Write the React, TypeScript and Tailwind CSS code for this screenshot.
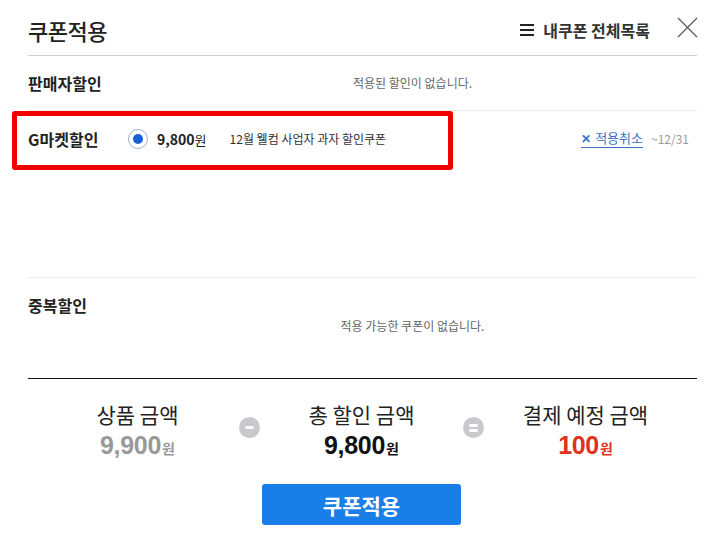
function SummaryItem({ label, amount, color }: { label: string; amount: string; color: string }) {
  return (
    <div className="w-[180px] flex flex-col items-center">
      <div className="text-[21px] leading-[26px] h-[31px] text-[#222]">{label}</div>
      <div className={`flex items-baseline font-bold h-[26px] ${color}`}>
        <span className="text-[25px] leading-[26px] tracking-[-0.3px]" style={{ fontFamily: '"Liberation Sans", Arial, sans-serif' }}>
          {amount}
        </span>
        <span className="text-[14px] leading-[16px] ml-[1px]">원</span>
      </div>
    </div>
  );
}

function Operator({ kind }: { kind: 'minus' | 'equals' }) {
  return (
    <div className="w-[44px] flex justify-center pt-[16px]">
      <div className="w-[21px] h-[21px] rounded-full bg-[#c9c9cd] flex flex-col items-center justify-center gap-[2px]">
        <div className="w-[9px] h-[3px] bg-white rounded-sm" />
        {kind === 'equals' && <div className="w-[9px] h-[3px] bg-white rounded-sm" />}
      </div>
    </div>
  );
}

export default function App() {
  return (
    <div
      className="w-[723px] h-[558px] bg-white text-[#222] overflow-hidden"
      style={{ fontFamily: '"Noto Sans CJK KR", "Noto Sans", sans-serif' }}
    >
      <div className="pl-[28px] pr-[26px]">
        {/* header */}
        <div className="h-[56px] flex items-center border-b border-[#cfcfcf] pt-[4px]">
          <h1 className="text-[22px] leading-[28px] font-medium tracking-[-0.5px]">쿠폰적용</h1>
          <div className="ml-auto flex items-center gap-[9px]">
            <svg width="14" height="12" viewBox="0 0 14 12" className="mt-[1px]">
              <rect x="0" y="0" width="14" height="2" fill="#222" />
              <rect x="0" y="5" width="14" height="2" fill="#222" />
              <rect x="0" y="10" width="14" height="2" fill="#222" />
            </svg>
            <span className="text-[16px] font-semibold text-[#333] leading-[20px]">내쿠폰 전체목록</span>
          </div>
          <button className="ml-[27px] mr-[-1px] mb-[4px]">
            <svg width="21" height="21" viewBox="0 0 21 21">
              <path d="M1 1 L20 20 M20 1 L1 20" stroke="#555" strokeWidth="1.1" fill="none" />
            </svg>
          </button>
        </div>

        {/* seller discount */}
        <div className="h-[55px] flex items-center border-b border-[#ececec]">
          <div className="w-[100px] text-[16px] font-bold leading-[20px]">판매자할인</div>
          <div className="flex-1 text-center text-[12px] text-[#666] leading-[16px]">적용된 할인이 없습니다.</div>
        </div>

        {/* gmarket discount */}
        <div className="h-[167px] border-b border-[#ececec]">
          <div className="relative h-[56px] flex items-center">
            <div className="w-[100px] text-[16px] font-bold leading-[20px]">G마켓할인</div>
            <div className="w-[20px] h-[20px] rounded-full border border-[#9fb3cc] flex items-center justify-center bg-white">
              <div className="w-[10px] h-[10px] rounded-full bg-[#1560d8]" />
            </div>
            <div className="ml-[9px] leading-[18px]">
              <span className="text-[14px] font-bold">9,800</span>
              <span className="text-[13px]">원</span>
            </div>
            <div className="ml-[23px] text-[12px] text-[#333] leading-[16px]">12월 웰컴 사업자 과자 할인쿠폰</div>
            <div className="ml-auto flex items-center gap-[8px] text-[12px] leading-[16px] pr-[8px]">
              <span className="flex items-center gap-[4px] border-b border-[#3a72c4] text-[#3a72c4] pb-[1px]">
                <span className="font-bold text-[12px]">✕</span>
                <span className="text-[13px]">적용취소</span>
              </span>
              <span className="text-[#999]">~12/31</span>
            </div>
            <div className="absolute left-[-16px] top-[0px] w-[441px] h-[59px] border-[5px] border-[#f00000] rounded-[3px] pointer-events-none" />
          </div>
        </div>

        {/* duplicate discount */}
        <div className="h-[101px] border-b border-[#111] pt-[17px]">
          <div className="text-[16px] font-bold leading-[20px]">중복할인</div>
          <div className="flex">
            <div className="w-[100px]" />
            <div className="flex-1 text-center text-[12px] text-[#666] leading-[16px] mt-[3px]">적용 가능한 쿠폰이 없습니다.</div>
          </div>
        </div>
      </div>

      {/* summary */}
      <div className="flex justify-center pt-[22px]">
        <SummaryItem label="상품 금액" amount="9,900" color="text-[#999]" />
        <Operator kind="minus" />
        <SummaryItem label="총 할인 금액" amount="9,800" color="text-[#111]" />
        <Operator kind="equals" />
        <SummaryItem label="결제 예정 금액" amount="100" color="text-[#e0311c]" />
      </div>

      <div className="flex justify-center mt-[26px]">
        <button className="w-[199px] h-[41px] rounded-[3px] bg-[#1a7ee9] text-white text-[21px] font-semibold leading-[28px]">
          쿠폰적용
        </button>
      </div>
    </div>
  );
}
